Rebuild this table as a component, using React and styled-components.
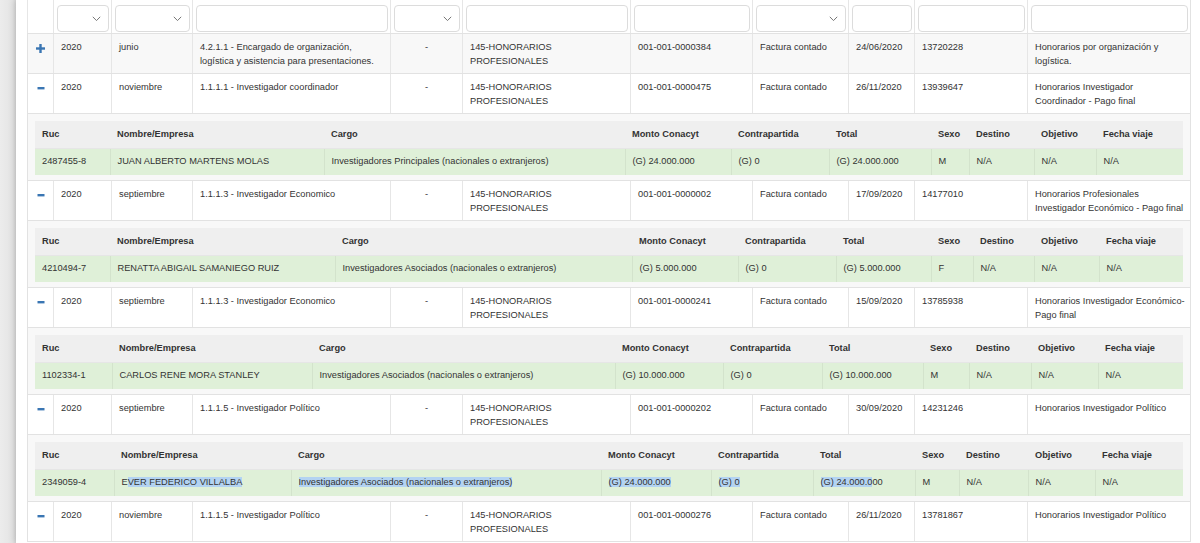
import React from 'react'
import styled, { createGlobalStyle } from 'styled-components'

const GlobalStyle = createGlobalStyle`
  * { box-sizing: border-box; }
  html, body { margin: 0; padding: 0; overflow: hidden; }
  body {
    font-family: "Liberation Sans", Arial, sans-serif;
    color: #333;
    background: #e8e8e8;
  }
`

const mainCols = [26, 58, 81, 198, 72, 168, 122, 96, 66, 113, 163]
const filters = [null, 'select', 'select', 'input', 'select', 'input', 'input', 'select', 'input', 'input', 'input']

const Sel = styled.span`
  background: #b3d3f2;
`

const rows = [
    {
        open: false, year: '2020', month: 'junio',
        item: '4.2.1.1 - Encargado de organización, logística y asistencia para presentaciones.',
        fact: '001-001-0000384', date: '24/06/2020', num: '13720228',
        desc: 'Honorarios por organización y logística.',
    },
    {
        open: true, year: '2020', month: 'noviembre',
        item: '1.1.1.1 - Investigador coordinador',
        fact: '001-001-0000475', date: '26/11/2020', num: '13939647',
        desc: 'Honorarios Investigador Coordinador - Pago final',
        detail: {
            widths: [75, 214, 301, 106, 98, 102, 38, 65, 62, 87],
            ruc: '2487455-8', name: 'JUAN ALBERTO MARTENS MOLAS',
            cargo: 'Investigadores Principales (nacionales o extranjeros)',
            monto: '(G) 24.000.000', contra: '(G) 0', total: '(G) 24.000.000', sexo: 'M',
        },
    },
    {
        open: true, year: '2020', month: 'septiembre',
        item: '1.1.1.3 - Investigador Economico',
        fact: '001-001-0000002', date: '17/09/2020', num: '14177010',
        desc: 'Honorarios Profesionales Investigador Económico - Pago final',
        detail: {
            widths: [75, 225, 297, 106, 98, 95, 42, 61, 65, 84],
            ruc: '4210494-7', name: 'RENATTA ABIGAIL SAMANIEGO RUIZ',
            cargo: 'Investigadores Asociados (nacionales o extranjeros)',
            monto: '(G) 5.000.000', contra: '(G) 0', total: '(G) 5.000.000', sexo: 'F',
        },
    },
    {
        open: true, year: '2020', month: 'septiembre',
        item: '1.1.1.3 - Investigador Economico',
        fact: '001-001-0000241', date: '15/09/2020', num: '13785938',
        desc: 'Honorarios Investigador Económico-Pago final',
        detail: {
            widths: [77, 200, 303, 108, 99, 101, 46, 62, 67, 85],
            ruc: '1102334-1', name: 'CARLOS RENE MORA STANLEY',
            cargo: 'Investigadores Asociados (nacionales o extranjeros)',
            monto: '(G) 10.000.000', contra: '(G) 0', total: '(G) 10.000.000', sexo: 'M',
        },
    },
    {
        open: true, year: '2020', month: 'septiembre',
        item: '1.1.1.5 - Investigador Político',
        fact: '001-001-0000202', date: '30/09/2020', num: '14231246',
        desc: 'Honorarios Investigador Político',
        detail: {
            widths: [79, 177, 310, 110, 102, 102, 44, 69, 67, 88],
            ruc: '2349059-4',
            name: <>E<Sel>VER FEDERICO VILLALBA</Sel></>,
            cargo: <Sel>Investigadores Asociados (nacionales o extranjeros)</Sel>,
            monto: <Sel>(G) 24.000.000</Sel>,
            contra: <Sel>(G) 0</Sel>,
            total: <><Sel>(G) 24.000.0</Sel>00</>,
            sexo: 'M',
        },
    },
    {
        open: true, year: '2020', month: 'noviembre',
        item: '1.1.1.5 - Investigador Político',
        fact: '001-001-0000276', date: '26/11/2020', num: '13781867',
        desc: 'Honorarios Investigador Político',
    },
]

const subHeads = ['Ruc', 'Nombre/Empresa', 'Cargo', 'Monto Conacyt', 'Contrapartida', 'Total', 'Sexo', 'Destino', 'Objetivo', 'Fecha viaje']

function Toggle({ open }) {
    if (open) {
        return (
            <svg width="8" height="8" viewBox="0 0 8 8">
                <rect x="0.5" y="3" width="7" height="2.4" fill="#3a76b3" />
            </svg>
        )
    }
    return (
        <svg width="9" height="9" viewBox="0 0 9 9">
            <rect x="0" y="3.3" width="9" height="2.4" fill="#3a76b3" />
            <rect x="3.3" y="0" width="2.4" height="9" fill="#3a76b3" />
        </svg>
    )
}

function Chevron() {
    return (
        <svg width="9" height="6" viewBox="0 0 9 6">
            <polyline points="0.8,0.8 4.5,4.6 8.2,0.8" fill="none" stroke="#777" strokeWidth="1" />
        </svg>
    )
}

function Detail({ d }) {
    const values = [d.ruc, d.name, d.cargo, d.monto, d.contra, d.total, d.sexo, 'N/A', 'N/A', 'N/A']
    return (
        <DetailRow>
            <DetailCell colSpan={11}>
                <SubTable>
                    <colgroup>
                        {d.widths.map((w, i) => <Col key={i} $w={w} />)}
                    </colgroup>
                    <thead>
                        <tr>
                            {subHeads.map(h => <SubHead key={h}>{h}</SubHead>)}
                        </tr>
                    </thead>
                    <tbody>
                        <tr>
                            {values.map((v, i) => <SubCell key={i}>{v}</SubCell>)}
                        </tr>
                    </tbody>
                </SubTable>
            </DetailCell>
        </DetailRow>
    )
}

function App() {
    return (
        <Page>
            <GlobalStyle />
            <Panel>
                <MainTable>
                    <colgroup>
                        {mainCols.map((w, i) => <Col key={i} $w={w} />)}
                    </colgroup>
                    <thead>
                        <FilterRow>
                            {filters.map((f, i) => (
                                <FilterCell key={i}>
                                    {f === 'select' && <SelectBox><Chevron /></SelectBox>}
                                    {f === 'input' && <FilterInput type="text" readOnly />}
                                </FilterCell>
                            ))}
                        </FilterRow>
                    </thead>
                    <tbody>
                        {rows.map((r, i) => (
                            <React.Fragment key={i}>
                                <Row $striped={i === 0}>
                                    <IconCell><Toggle open={r.open} /></IconCell>
                                    <Cell>{r.year}</Cell>
                                    <Cell>{r.month}</Cell>
                                    <Cell>{r.item}</Cell>
                                    <Cell $center>-</Cell>
                                    <Cell>145-HONORARIOS PROFESIONALES</Cell>
                                    <Cell>{r.fact}</Cell>
                                    <Cell>Factura contado</Cell>
                                    <Cell>{r.date}</Cell>
                                    <Cell>{r.num}</Cell>
                                    <Cell>{r.desc}</Cell>
                                </Row>
                                {r.detail && <Detail d={r.detail} />}
                            </React.Fragment>
                        ))}
                    </tbody>
                </MainTable>
            </Panel>
        </Page>
    )
}

export default App


const Page = styled.div`
    height: 543px;
    overflow: hidden;
    padding-left: 16px;
    background: linear-gradient(90deg, #ececec 0%, #e4e4e4 80%, #d6d6d6 100%);
    background-size: 16px 100%;
    background-repeat: no-repeat;
`

const Panel = styled.div`
    width: 1200px;
    height: 100%;
    padding-left: 11px;
    background: #fff;
    box-shadow: -2px 0 6px rgba(0, 0, 0, 0.12);
`

const MainTable = styled.table`
    width: 1163px;
    table-layout: fixed;
    border-collapse: collapse;
    font-size: 9.25px;
    line-height: 13.5px;
    border-left: 1px solid #e2e2e2;
    border-right: 1px solid #e2e2e2;
`

const Col = styled.col`
    width: ${p => p.$w}px;
`

const FilterRow = styled.tr`
    height: 33px;
`

const FilterCell = styled.th`
    padding: 5px 2px 1px 3px;
    border-left: 1px solid #e6e6e6;
    border-bottom: 1px solid #e2e2e2;
    vertical-align: top;
    font-weight: normal;
`

const FilterInput = styled.input`
    display: block;
    width: 100%;
    height: 27px;
    margin: 0;
    border: 1px solid #dcdcdc;
    border-radius: 4px;
    background: #fff;
    outline: none;
`

const SelectBox = styled.div`
    display: flex;
    align-items: center;
    justify-content: flex-end;
    height: 27px;
    padding-right: 7px;
    border: 1px solid #dcdcdc;
    border-radius: 4px;
    background: #fff;
`

const Row = styled.tr`
    height: 40px;
    background: ${p => (p.$striped ? '#f8f8f8' : '#fff')};
`

const Cell = styled.td`
    padding: 7px 7px 5px 7px;
    vertical-align: top;
    text-align: ${p => (p.$center ? 'center' : 'left')};
    border-left: 1px solid #e6e6e6;
    border-bottom: 1px solid #e2e2e2;

    &:last-child {
        padding-right: 5px;
    }
`

const IconCell = styled.td`
    padding: 8px 0 0 0;
    text-align: center;
    vertical-align: top;
    border-bottom: 1px solid #e2e2e2;
    line-height: 0;

    svg {
        display: inline-block;
        margin-top: 2px;
    }
`

const DetailRow = styled.tr`
    background: #f8f8f8;
`

const DetailCell = styled.td`
    padding: 7px 7px 5px 7px;
    border-bottom: 1px solid #e2e2e2;
`

const SubTable = styled.table`
    width: 100%;
    table-layout: fixed;
    border-collapse: collapse;
    white-space: nowrap;
`

const SubHead = styled.th`
    height: 27px;
    padding: 0 7px;
    text-align: left;
    font-weight: bold;
    background: #efefef;
    border-bottom: 1px solid #e6e6e6;
    overflow: hidden;
`

const SubCell = styled.td`
    height: 27px;
    padding: 0 7px;
    background: #dff0d8;
    border-left: 1px solid #d3e3cc;
    overflow: hidden;

    &:first-child {
        border-left: none;
    }
`
